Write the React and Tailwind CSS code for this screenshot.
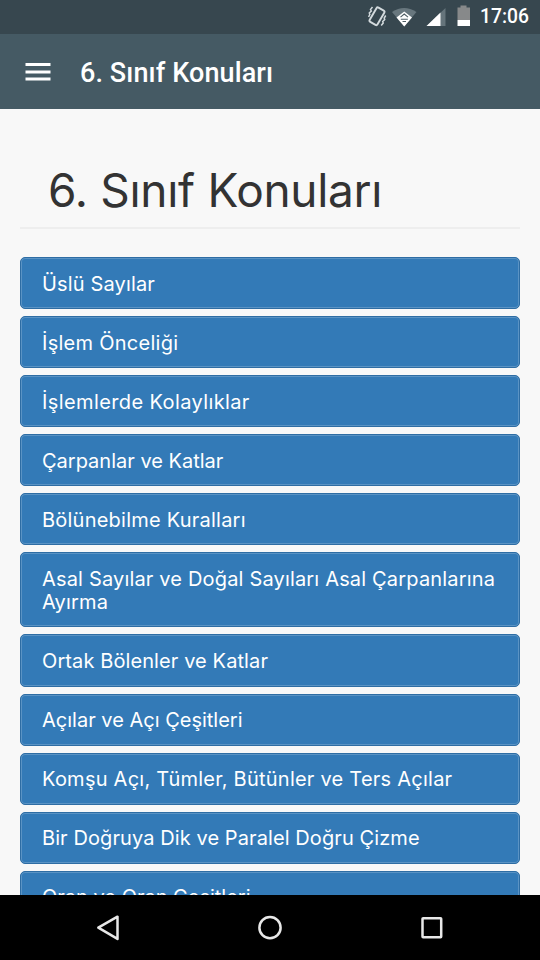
import clsx from "clsx";

const topics = [
  { title: "Üslü Sayılar", style: "h-[52.1px] tracking-[0.15px]" },
  { title: "İşlem Önceliği", style: "h-[52.1px] tracking-[0.27px]" },
  { title: "İşlemlerde Kolaylıklar", style: "h-[52.1px] tracking-[0.39px]" },
  { title: "Çarpanlar ve Katlar", style: "h-[52.1px]" },
  { title: "Bölünebilme Kuralları", style: "h-[52.1px] tracking-[0.23px]" },
  {
    title: "Asal Sayılar ve Doğal Sayıları Asal Çarpanlarına Ayırma",
    style: "h-[75px] tracking-[0.17px]",
  },
  { title: "Ortak Bölenler ve Katlar", style: "h-[52.1px] tracking-[0.1px]" },
  { title: "Açılar ve Açı Çeşitleri", style: "h-[52.1px]" },
  {
    title: "Komşu Açı, Tümler, Bütünler ve Ters Açılar",
    style: "h-[52.1px] tracking-[0.24px]",
  },
  {
    title: "Bir Doğruya Dik ve Paralel Doğru Çizme",
    style: "h-[52.1px] tracking-[0.09px]",
  },
  { title: "Oran ve Oran Çeşitleri", style: "h-[52.1px]" },
];

const StatusBar = () => (
  <div className="flex h-[34px] shrink-0 items-center justify-end bg-[#37474f] pr-[11px] text-white">
    <svg className="mr-[7px] h-[34px] w-[112px]" viewBox="0 0 112 34" fill="none">
      {/* vibrate */}
      <g stroke="#d3dadd" strokeWidth="1.9">
        <rect x="11.5" y="8" width="9" height="16.500" rx="1.5" transform="rotate(30 16 16.250)" />
        <path
          d="M11.500 7l-2 2.500.8 1.500-2 2 .5 1.500-1.200 2.500M24.700 15.500l-1.500 2.500.5 1.500-2 2 .5 1.500-2 2.500"
          strokeWidth="1.5"
        />
      </g>
      {/* wifi */}
      <path d="M31 12Q43 4 55.500 12L43.250 26.500z" fill="#68777e" />
      <path d="M35.500 17.500L43.250 11.500 51 17.500 43.250 26.500z" fill="#fff" />
      <path
        d="M39.500 17.200L43.250 14l3.750 3.200M39.800 19.200h7M41.500 21.500h3.500"
        stroke="#4e5d64"
        strokeWidth="1.1"
      />
      {/* signal */}
      <path d="M84.500 8v18H65.500z" fill="#65747b" />
      <path d="M79.500 12.500V26H65.500z" fill="#fff" />
      {/* battery */}
      <path d="M96.500 7.500h3V5.500h6v2h3.500V20H96.500z" fill="#87898a" />
      <path d="M96.500 20H109v6H96.500z" fill="#fff" />
    </svg>
    <span className="w-[49px] pt-px font-['Roboto',sans-serif] text-[19.3px] font-medium">
      17:06
    </span>
  </div>
);

const NavBar = () => (
  <nav className="grid h-[65px] shrink-0 grid-cols-3 items-center justify-items-center bg-black px-[27px]">
    <svg className="size-8" viewBox="0 0 32 32" fill="none" stroke="#e8e8e8" strokeWidth="2.5">
      <path d="M6.300 15.700L25.500 4.700v22.200z" strokeLinejoin="round" />
    </svg>
    <svg className="size-8" viewBox="0 0 32 32" fill="none" stroke="#e8e8e8" strokeWidth="2.5">
      <circle cx="16" cy="15.700" r="10.600" />
    </svg>
    <svg className="size-8" viewBox="0 0 32 32" fill="none" stroke="#e8e8e8" strokeWidth="2.5">
      <rect x="6.500" y="6.200" width="18.700" height="19" rx="0.600" />
    </svg>
  </nav>
);

const App = () => {
  return (
    <div className="flex h-[960px] w-[540px] flex-col overflow-hidden bg-[#f8f8f8]">
      <StatusBar />
      <header className="flex h-[75px] shrink-0 items-center bg-[#455a64] pl-[25px]">
        <button className="mr-[29px]" aria-label="Menu">
          <svg className="h-5 w-[26px]" viewBox="0 0 26 20" fill="#fff">
            <path d="M.5 1h25v3H.5zM.5 8.500h25v3H.5zM.5 15.500h25v3H.5z" />
          </svg>
        </button>
        <h1 className="pt-[3px] font-['Roboto',sans-serif] text-[27px] font-medium tracking-[0.1px] text-white">
          6. Sınıf Konuları
        </h1>
      </header>
      <main className="min-h-0 flex-1 overflow-hidden px-5 font-['Inter',sans-serif]">
        <h2 className="flex h-[120px] items-end border-b-2 border-[#eee] pb-[9px] pl-7 text-[46px] leading-[56px] tracking-[-0.3px] text-[#333]">
          6. Sınıf Konuları
        </h2>
        <div className="mt-7 flex flex-col gap-[7px]">
          {topics.map((topic) => (
            <a
              key={topic.title}
              className={clsx(
                "shrink-0 rounded-[5px] border border-[#2e6da4] bg-[#337ab7] px-[21px] pt-[14.5px] text-[20px] leading-[23px] text-white shadow-[inset_0_0_0_1px_#5a93c4]",
                topic.style
              )}
            >
              {topic.title}
            </a>
          ))}
        </div>
      </main>
      <NavBar />
    </div>
  );
};

export default App;
